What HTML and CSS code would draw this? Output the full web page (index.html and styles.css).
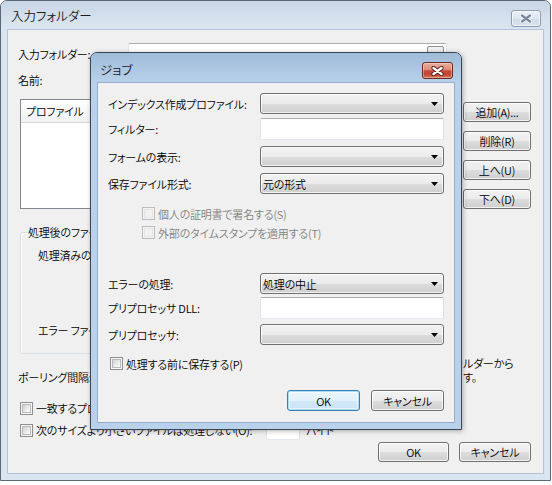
FILE: index.html
```html
<!DOCTYPE html>
<html lang="ja">
<head>
<meta charset="utf-8">
<title>入力フォルダー</title>
<link rel="stylesheet" href="styles.css">
</head>
<body>
<div class="desk">
  <div class="window outer">
    <div class="titlebar outer-title">
      <span class="title">入力フォルダー</span>
      <span class="close close-inactive">
        <svg width="12" height="9" viewBox="0 0 12 9"><path d="M2 1.5 L10 7.5 M10 1.5 L2 7.5" stroke="#f4f7fb" stroke-width="4" stroke-linecap="round"/><path d="M2 1.5 L10 7.5 M10 1.5 L2 7.5" stroke="#7b889c" stroke-width="2.2" stroke-linecap="round"/></svg>
      </span>
    </div>
    <div class="frame">
      <div class="client outer-client">
        <div class="row r-folder">
          <span class="lbl lbl-main">入力フォルダー:</span>
          <span class="textbox folder-box"><span class="browse"></span></span>
        </div>
        <div class="row r-name">
          <span class="lbl lbl-main">名前:</span>
          <span class="textbox name-box"></span>
        </div>
        <div class="mid">
          <div class="listview">
            <div class="lv-head"><span class="lv-col">プロファイル</span></div>
          </div>
          <div class="side-btns">
            <span class="btn side">追加(A)...</span>
            <span class="btn side">削除(R)</span>
            <span class="btn side">上へ(U)</span>
            <span class="btn side">下へ(D)</span>
          </div>
        </div>
        <fieldset class="group">
          <legend>処理後のファイル</legend>
          <div class="g-row g1">処理済みのファイル:</div>
          <div class="g-row g2">エラー ファイル:</div>
        </fieldset>
        <div class="poll">
          <span class="lbl">ポーリング間隔:</span>
          <div class="note">
            <span class="note-a">ファイルを入力フォ<br>削除しま</span>
            <span class="note-b">ルダーから<br>す。</span>
          </div>
        </div>
        <div class="cbrow cb1">
          <span class="cb"></span><span class="cbtext">一致するプロファイルのみ処理する(M)</span>
        </div>
        <div class="cbrow cb2">
          <span class="cb"></span><span class="cbtext size-text">次のサイズより小さいファイルは処理しない(O):</span>
          <span class="textbox size-box"></span>
          <span class="unit">バイト</span>
        </div>
        <div class="btnrow outer-btns">
          <span class="btn main">OK</span>
          <span class="btn main">キャンセル</span>
        </div>
      </div>
    </div>
  </div>

  <div class="window dialog">
    <div class="titlebar dialog-title">
      <span class="title">ジョブ</span>
      <span class="close close-red">
        <svg width="13" height="10" viewBox="0 0 13 10"><path d="M2.5 2 L10.5 8 M10.5 2 L2.5 8" stroke="#5a1c14" stroke-width="4.2" stroke-linecap="round"/><path d="M2.5 2 L10.5 8 M10.5 2 L2.5 8" stroke="#ffffff" stroke-width="2.4" stroke-linecap="round"/></svg>
      </span>
    </div>
    <div class="frame">
      <div class="client dialog-client">
        <div class="frow d1">
          <span class="flbl">インデックス作成プロファイル:</span>
          <span class="combo"><span class="ctext"></span><svg class="arrow" width="7" height="4" viewBox="0 0 7 4"><path d="M0 0 H7 L3.5 4 Z" fill="#000"/></svg></span>
        </div>
        <div class="frow d2">
          <span class="flbl">フィルター:</span>
          <span class="textbox field"></span>
        </div>
        <div class="frow d3">
          <span class="flbl">フォームの表示:</span>
          <span class="combo"><span class="ctext"></span><svg class="arrow" width="7" height="4" viewBox="0 0 7 4"><path d="M0 0 H7 L3.5 4 Z" fill="#000"/></svg></span>
        </div>
        <div class="frow d4">
          <span class="flbl">保存ファイル形式:</span>
          <span class="combo"><span class="ctext">元の形式</span><svg class="arrow" width="7" height="4" viewBox="0 0 7 4"><path d="M0 0 H7 L3.5 4 Z" fill="#000"/></svg></span>
        </div>
        <div class="cbrow dis s1">
          <span class="cb disabled"></span><span class="cbtext">個人の証明書で署名する(S)</span>
        </div>
        <div class="cbrow dis s2">
          <span class="cb disabled"></span><span class="cbtext">外部のタイムスタンプを適用する(T)</span>
        </div>
        <div class="frow d5">
          <span class="flbl">エラーの処理:</span>
          <span class="combo"><span class="ctext">処理の中止</span><svg class="arrow" width="7" height="4" viewBox="0 0 7 4"><path d="M0 0 H7 L3.5 4 Z" fill="#000"/></svg></span>
        </div>
        <div class="frow d6">
          <span class="flbl">プリプロセッサ DLL:</span>
          <span class="textbox field"></span>
        </div>
        <div class="frow d7">
          <span class="flbl">プリプロセッサ:</span>
          <span class="combo"><span class="ctext"></span><svg class="arrow" width="7" height="4" viewBox="0 0 7 4"><path d="M0 0 H7 L3.5 4 Z" fill="#000"/></svg></span>
        </div>
        <div class="cbrow p1">
          <span class="cb"></span><span class="cbtext">処理する前に保存する(P)</span>
        </div>
        <div class="btnrow dialog-btns">
          <span class="btn dbtn default">OK</span>
          <span class="btn dbtn">キャンセル</span>
        </div>
      </div>
    </div>
  </div>
</div>
</body>
</html>
```

FILE: styles.css
```css
* { box-sizing: border-box; }
html, body { margin: 0; padding: 0; background: #ffffff; }
body {
  font-family: "Noto Sans CJK JP", "Noto Sans", sans-serif;
  font-size: 11px;
  font-weight: 350;
  letter-spacing: -0.2px;
  line-height: 14px;
  color: #000;
  font-feature-settings: "palt";
}
.desk { position: relative; width: 552px; height: 485px; overflow: hidden; }

/* windows */
.window { display: flex; flex-direction: column; }
.title { font-size: 12.5px; letter-spacing: 0; color: #1b1b1b; }
.outer {
  width: 551px; height: 481px;
  border: 1px solid #5d6773;
  border-radius: 7px 7px 0 0;
  background: #dae5f2;
}
.titlebar { display: flex; justify-content: space-between; align-items: flex-start; flex: none; }
.outer-title {
  height: 29px;
  padding: 8px 9px 0 10px;
  border-radius: 6px 6px 0 0;
  background: linear-gradient(#c6d4e4, #d6e1ee 60%, #dae5f2);
}
.frame { flex: 1; padding: 0 7px 7px 7px; display: flex; }
.client { flex: 1; background: #f0f0f0; display: flex; flex-direction: column; }
.outer .client { box-shadow: 0 0 0 1px #b4c3d5; }

.close { display: flex; align-items: center; justify-content: center; border-radius: 3px; }
.close-inactive {
  width: 30px; height: 17px; margin-top: 1px;
  border: 1px solid #8e9db3;
  background: linear-gradient(#eaf0f7, #dde6f1 50%, #cfdbe9 51%, #d9e3ef);
  box-shadow: inset 0 0 0 1px rgba(255,255,255,.55);
}

/* outer client layout */
.outer-client { padding: 13px 12px 0 10px; }
.row { display: flex; align-items: center; height: 21px; }
.r-name { margin-top: 5px; }
.lbl-main { width: 110px; flex: none; }
.textbox {
  display: block; background: #fff;
  border: 1px solid; border-color: #abadb3 #dbdfe6 #e3e9ef #e2e3ea;
  border-radius: 2px;
}
.folder-box { width: 319px; height: 21px; position: relative; display: flex; justify-content: flex-end; padding: 2px 2px 0 0; }
.browse {
  width: 17px; height: 15px; border: 1px solid #8c8c8c; border-radius: 2px;
  background: linear-gradient(#f4f4f4, #e0e0e0);
}
.name-box { width: 319px; height: 21px; }

.mid { display: flex; margin-top: 9px; }
.listview {
  width: 435px; height: 110px; margin-left: 2px;
  border: 1px solid #828790; background: #fff;
}
.lv-head {
  height: 23px; display: flex; align-items: center;
  background: linear-gradient(#ffffff, #f7f8f9 50%, #f1f2f4);
  border-bottom: 1px solid #d5d5d5;
}
.lv-col { padding-left: 5px; width: 120px; height: 100%; display: flex; align-items: center; border-right: 1px solid #e1e3e6; }
.side-btns { display: flex; flex-direction: column; gap: 9px; margin-left: 8px; padding-top: 3px; }

.btn {
  display: flex; align-items: center; justify-content: center;
  border: 1px solid #707070; border-radius: 3px;
  background: linear-gradient(#f2f2f2, #ebebeb 50%, #dddddd 51%, #cfcfcf);
  box-shadow: inset 0 0 0 1px rgba(255,255,255,.75);
  white-space: nowrap;
}
.side { width: 68px; height: 20px; }

.group {
  margin: 16px 0 0 2px; width: 435px; height: 129px;
  padding: 0 0 0 6px;
  border: 1px solid #d5dfe5; border-radius: 3px;
  box-shadow: inset 1px 1px 0 #fff;
}
.group legend { padding: 0 1px; line-height: 14px; }
.g-row { margin-left: 11px; }
.g1 { margin-top: 9px; }
.g2 { margin-top: 61px; }

.poll { display: flex; align-items: flex-end; margin-top: 2px; }
.poll .lbl { flex: none; }
.note {
  flex: 1; display: grid; grid-template-columns: 1fr 68px;
}
.note-a { text-align: right; white-space: nowrap; padding-right: 1px; }
.note-b { white-space: nowrap; }

.cbrow { display: flex; align-items: center; height: 14px; }
.cb {
  width: 13px; height: 13px; flex: none; position: relative;
  border: 1px solid #8e8f8f; background: #f6f6f6;
}
.cb::before {
  content: ""; position: absolute; left: 1px; top: 1px; right: 1px; bottom: 1px;
  border: 1px solid #b7b9bb;
  background: linear-gradient(135deg, #cfd0d1, #f3f3f3 75%, #fbfbfb);
}
.cb.disabled { border-color: #bcbcbc; background: #f4f4f4; }
.cb.disabled::before { border-color: #e4e4e4; background: #f1f1f1; }
.cbtext { margin-left: 3px; white-space: nowrap; }
.dis .cbtext { color: #7f7f7f; }

.cb1 { margin-top: 17px; padding-left: 2px; }
.cb2 { margin-top: 5px; padding-left: 2px; height: 20px; }
.size-text { width: 230px; flex: none; }
.size-box { width: 34px; height: 20px; }
.unit { margin-left: 6px; }

.btnrow { display: flex; justify-content: flex-end; }
.outer-btns { margin-top: 2px; gap: 10px; }
.main { width: 71px; height: 20px; }
.main + .main { width: 72px; }

/* dialog */
.dialog {
  position: absolute; left: 90px; top: 52px;
  width: 372px; height: 378px;
  border: 1px solid #3b4552;
  border-radius: 7px 7px 0 0;
  background: #b9d1ea;
  box-shadow: 1px 1px 5px rgba(0,0,0,.3);
}
.dialog-title {
  height: 30px;
  padding: 10px 8px 0 9px;
  border-radius: 6px 6px 0 0;
  background: linear-gradient(#9fbbd9, #aec8e3 55%, #b9d1ea);
}
.close-red {
  width: 31px; height: 17px; margin-top: -1px;
  border: 1px solid #6b2a22;
  background: linear-gradient(#eab0a2, #dc8b7a 45%, #c34a3b 52%, #c24634 75%, #d7775b);
  box-shadow: inset 0 0 0 1px rgba(255,220,210,.45);
}
.dialog-client { padding: 10px 10px 0 10px; box-shadow: 0 0 0 1px #94aecb; }
.frow { display: flex; align-items: center; }
.flbl { width: 152px; flex: none; white-space: nowrap; }
.combo {
  width: 184px; height: 21px;
  display: flex; align-items: center;
  padding: 0 5px 0 2px;
  border: 1px solid #707070; border-radius: 3px;
  background: linear-gradient(#f2f2f2, #ebebeb 50%, #dddddd 51%, #cfcfcf);
  box-shadow: inset 0 0 0 1px rgba(255,255,255,.7);
}
.ctext { flex: 1; white-space: nowrap; }
.arrow { flex: none; }
.field { width: 184px; height: 22px; }

.d2 { margin-top: 4px; }
.d3 { margin-top: 6px; }
.d4 { margin-top: 6px; }
.s1 { margin-top: 13px; padding-left: 34px; height: 13px; }
.s2 { margin-top: 6px; padding-left: 34px; height: 13px; }
.d5 { margin-top: 34px; }
.d6 { margin-top: 3px; }
.d7 { margin-top: 5px; }
.p1 { margin-top: 12px; padding-left: 2px; height: 13px; }
.dialog-btns { margin-top: 20px; gap: 11px; }
.dbtn { width: 73px; height: 21px; }
.default {
  border-color: #3c7fb1;
  box-shadow: inset 0 0 0 1px #a8dcf5, inset 0 0 0 2px rgba(255,255,255,.5);
  background: linear-gradient(#eaf6fd, #e2f1fb 50%, #d2e9f8 51%, #c9e2f5);
}
```
